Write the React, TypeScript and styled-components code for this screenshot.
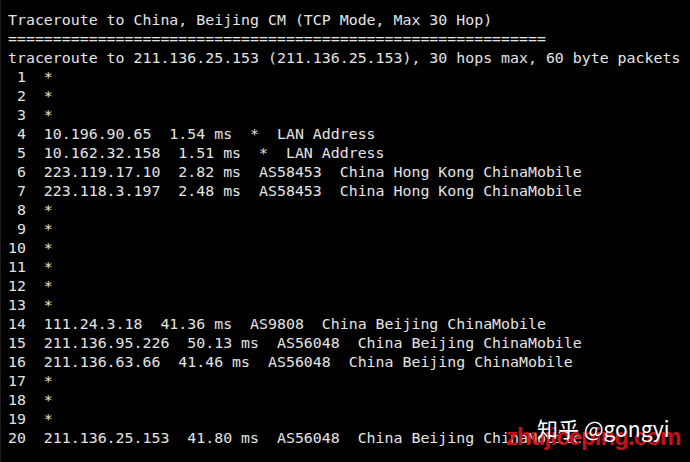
import React from "react";
import styled, { createGlobalStyle } from "styled-components";

const Global = createGlobalStyle`
  html, body { margin: 0; padding: 0; background: #000; }
  #root { width: 690px; height: 462px; }
`;

const Terminal = styled.div`
  position: relative;
  width: 690px;
  height: 462px;
  box-sizing: border-box;
  background: #000;
  padding: 10.5px 0 0 7px;
  overflow: hidden;
  border-left: 1px solid #1a1a1a;
`;

const Line = styled.div`
  font-family: "DejaVu Sans Mono", "Liberation Mono", monospace;
  font-size: 14.9px;
  line-height: 19px;
  height: 19px;
  color: #e4e4e4;
  white-space: pre;
`;

const RedMark = styled.div`
  position: absolute;
  left: 505px;
  top: 425px;
  font-family: "Liberation Sans", Arial, sans-serif;
  font-weight: 700;
  font-size: 24px;
  line-height: 24px;
  letter-spacing: -0.9px;
  color: #d8121c;
  white-space: nowrap;
  opacity: 0.92;
`;

const ZhihuMark = styled.div`
  position: absolute;
  left: 536px;
  top: 418px;
  font-family: "Noto Sans CJK SC", "Noto Sans", sans-serif;
  font-size: 21px;
  line-height: 21px;
  color: #ffffff;
  white-space: nowrap;
`;

const lines = [
  "Traceroute to China, Beijing CM (TCP Mode, Max 30 Hop)",
  "=".repeat(60),
  "traceroute to 211.136.25.153 (211.136.25.153), 30 hops max, 60 byte packets",
  " 1  *",
  " 2  *",
  " 3  *",
  " 4  10.196.90.65  1.54 ms  *  LAN Address",
  " 5  10.162.32.158  1.51 ms  *  LAN Address",
  " 6  223.119.17.10  2.82 ms  AS58453  China Hong Kong ChinaMobile",
  " 7  223.118.3.197  2.48 ms  AS58453  China Hong Kong ChinaMobile",
  " 8  *",
  " 9  *",
  "10  *",
  "11  *",
  "12  *",
  "13  *",
  "14  111.24.3.18  41.36 ms  AS9808  China Beijing ChinaMobile",
  "15  211.136.95.226  50.13 ms  AS56048  China Beijing ChinaMobile",
  "16  211.136.63.66  41.46 ms  AS56048  China Beijing ChinaMobile",
  "17  *",
  "18  *",
  "19  *",
  "20  211.136.25.153  41.80 ms  AS56048  China Beijing ChinaMobile",
];

export default function App() {
  return (
    <>
      <Global />
      <Terminal>
        {lines.map((l, i) => (
          <Line key={i}>{l}</Line>
        ))}
        <RedMark>zhujiceping.com</RedMark>
        <ZhihuMark>知乎 @gongyi</ZhihuMark>
      </Terminal>
    </>
  );
}
